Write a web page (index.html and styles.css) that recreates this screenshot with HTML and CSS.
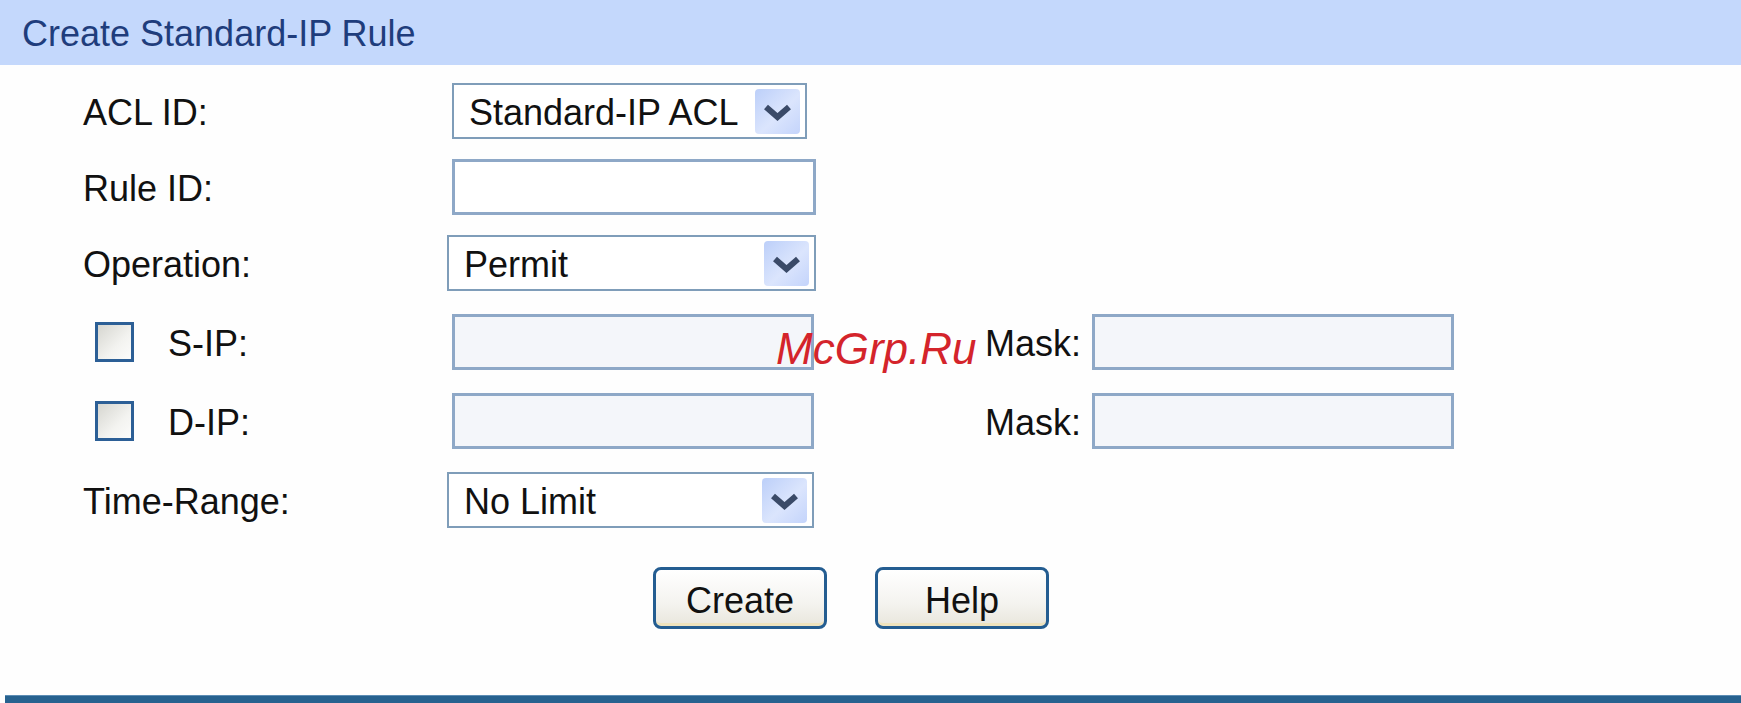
FILE: index.html
```
<!DOCTYPE html>
<html>
<head>
    <title>Create Standard-IP Rule</title>
    <link rel="stylesheet" href="styles.css">
</head>
<body>
    <div class="panel">
        <div class="panel-title">Create Standard-IP Rule</div>

        <div class="rule-form">
            <div class="row">
                <label class="field-label">ACL ID:</label>
                <div class="combo combo-acl">
                    <span class="combo-text">Standard-IP ACL</span>
                    <span class="combo-arrow">
                        <svg width="45" height="45" viewBox="0 0 45 45"><path d="M11 18 L22.5 28 L34 18" fill="none" stroke="#3a4a68" stroke-width="6"/></svg>
                    </span>
                </div>
            </div>

            <div class="row">
                <label class="field-label">Rule ID:</label>
                <div class="text-box text-box-rule"></div>
            </div>

            <div class="row">
                <label class="field-label">Operation:</label>
                <div class="combo combo-wide">
                    <span class="combo-text">Permit</span>
                    <span class="combo-arrow">
                        <svg width="45" height="45" viewBox="0 0 45 45"><path d="M11 18 L22.5 28 L34 18" fill="none" stroke="#3a4a68" stroke-width="6"/></svg>
                    </span>
                </div>
            </div>

            <div class="row row-ip">
                <div class="field-label check-label">
                    <span class="check-box"></span>
                    <span>S-IP:</span>
                </div>
                <div class="text-box text-box-ip disabled"></div>
                <label class="mask-label">Mask:</label>
                <div class="text-box text-box-ip disabled"></div>
            </div>

            <div class="row row-ip">
                <div class="field-label check-label">
                    <span class="check-box"></span>
                    <span>D-IP:</span>
                </div>
                <div class="text-box text-box-ip disabled"></div>
                <label class="mask-label">Mask:</label>
                <div class="text-box text-box-ip disabled"></div>
            </div>

            <div class="row row-ip">
                <label class="field-label">Time-Range:</label>
                <div class="combo combo-time">
                    <span class="combo-text">No Limit</span>
                    <span class="combo-arrow">
                        <svg width="45" height="45" viewBox="0 0 45 45"><path d="M11 18 L22.5 28 L34 18" fill="none" stroke="#3a4a68" stroke-width="6"/></svg>
                    </span>
                </div>
            </div>
        </div>

        <div class="actions">
            <button class="btn">Create</button>
            <button class="btn">Help</button>
        </div>

        <div class="footer-bar"></div>

        <span class="watermark">McGrp.Ru</span>
    </div>
</body>
</html>
```

FILE: styles.css
```
body {
    margin: 0;
    background-color: #fefefe;
    font-family: "Liberation Sans", Arial, sans-serif;
    font-size: 36px;
    color: #111;
}

.panel {
    position: relative;
    height: 703px;
    overflow: hidden;
}

.panel-title {
    height: 65px;
    line-height: 67px;
    padding-left: 22px;
    background-color: #c4d8fc;
    color: #1f3d7c;
}

.rule-form {
    padding-left: 83px;
    padding-top: 18px;
}

.row {
    display: flex;
    align-items: center;
    height: 56px;
}

.row + .row {
    margin-top: 20px;
}

.row + .row-ip {
    margin-top: 23px;
}

.field-label {
    width: 364px;
    flex-shrink: 0;
    padding-top: 4px;
}

.check-label {
    display: flex;
    align-items: center;
}

.check-box {
    width: 33px;
    height: 34px;
    margin-left: 12px;
    margin-right: 34px;
    margin-top: -4px;
    border: 3px solid #2c5f96;
    background: linear-gradient(135deg, #d6d6d0, #f3f3f0 60%, #fcfcfb);
}

/* combo boxes (select look) */
.combo {
    display: flex;
    align-items: center;
    justify-content: space-between;
    height: 52px;
    border: 2px solid #7f9db9;
    background-color: #fff;
}

.combo-acl {
    width: 351px;
    margin-left: 5px;
}

.combo-wide {
    width: 365px;
}

.combo-time {
    width: 363px;
}

.combo-text {
    padding-left: 15px;
    padding-top: 4px;
}

.combo-arrow {
    width: 45px;
    height: 45px;
    margin-right: 5px;
    border-radius: 4px;
    background: linear-gradient(135deg, #bccff9, #dbe5fd 55%, #c4d4fb);
}

.combo-arrow svg {
    display: block;
}

/* text boxes */
.text-box {
    height: 50px;
    margin-left: 5px;
    border: 3px solid #8ea8c7;
    background-color: #fff;
}

.text-box-rule {
    width: 358px;
}

.text-box-ip {
    width: 356px;
}

.text-box.disabled {
    background-color: #f4f6fa;
}

.mask-label {
    width: 267px;
    padding-right: 11px;
    padding-top: 4px;
    text-align: right;
}

.mask-label + .text-box {
    margin-left: 0;
}

.actions {
    display: flex;
    gap: 48px;
    padding-left: 653px;
    margin-top: 39px;
}

.btn {
    width: 174px;
    height: 62px;
    border: 3px solid #245d91;
    border-radius: 8px;
    background: linear-gradient(#ffffff, #f4f3ef 60%, #e9e6dc);
    box-shadow: inset 0 -6px 0 -3px #efe3bd;
    font-family: "Liberation Sans", Arial, sans-serif;
    font-size: 36px;
    color: #111;
    padding: 6px 0 0;
}

.footer-bar {
    height: 8px;
    margin-top: 66px;
    margin-left: 5px;
    background-color: #27628f;
    border-top: 1px solid #5d8db4;
}

.watermark {
    position: absolute;
    left: 776px;
    top: 327px;
    font-size: 44px;
    line-height: 1;
    font-style: italic;
    color: #d4242b;
}
```
